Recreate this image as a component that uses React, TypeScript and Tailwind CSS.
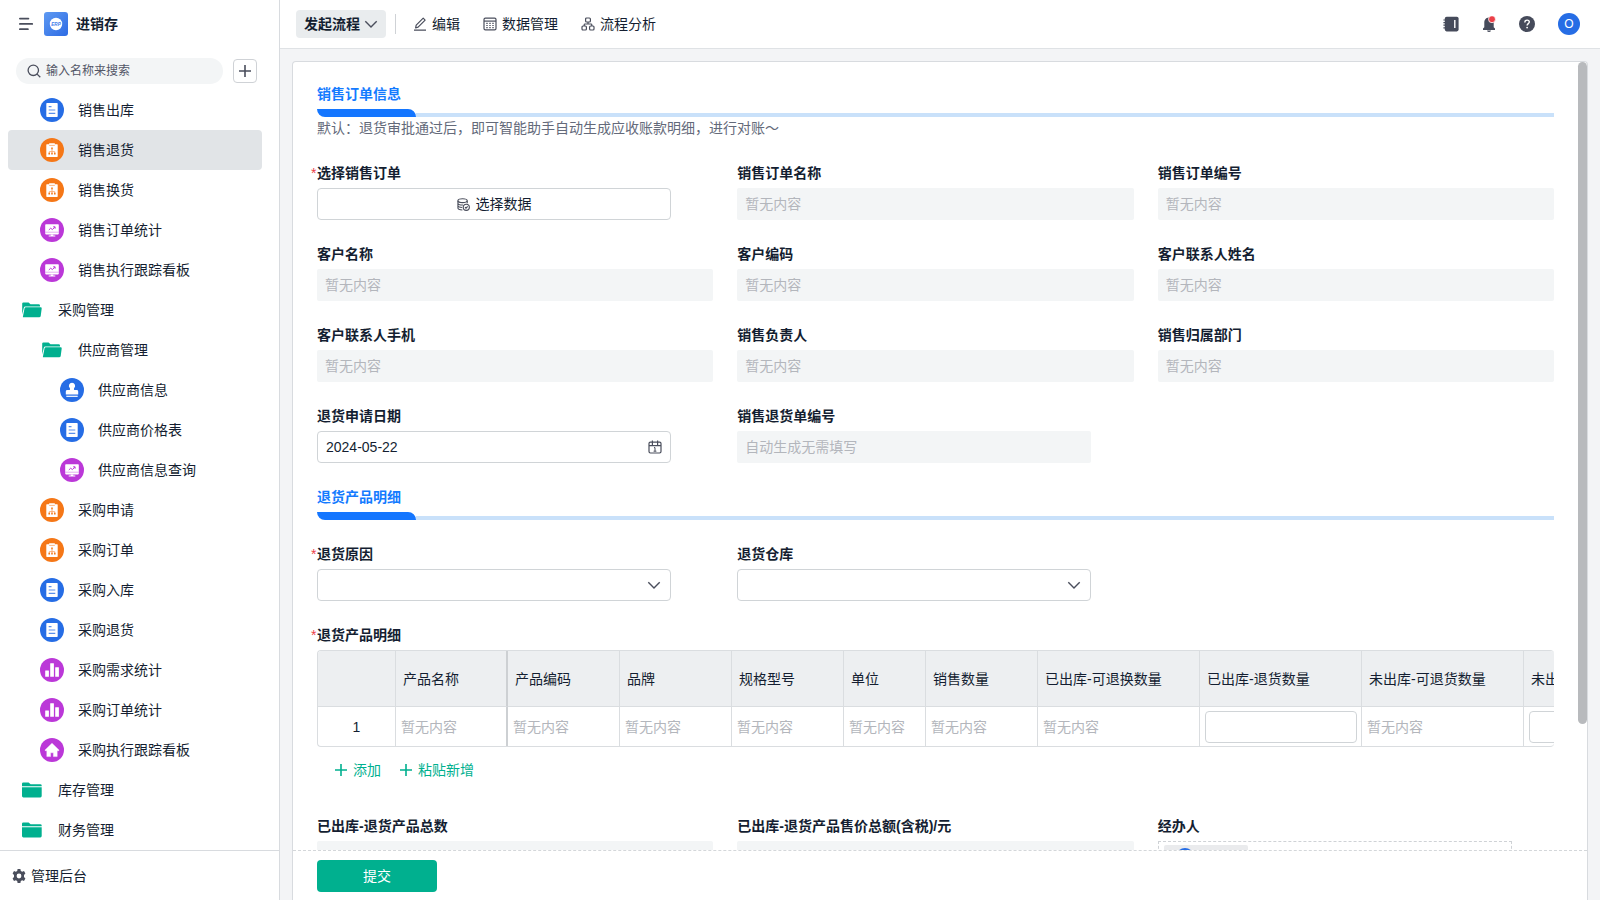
import { useState, type ReactNode } from "react";
import { clsx } from "clsx";

type IconName =
  | "folder"
  | "folderOpen"
  | "doc"
  | "flow"
  | "board"
  | "stamp"
  | "chart"
  | "home";

type NavItem = { label: string; icon: IconName; level: number };

const navItems: NavItem[] = [
  { label: "销售出库", icon: "doc", level: 1 },
  { label: "销售退货", icon: "flow", level: 1 },
  { label: "销售换货", icon: "flow", level: 1 },
  { label: "销售订单统计", icon: "board", level: 1 },
  { label: "销售执行跟踪看板", icon: "board", level: 1 },
  { label: "采购管理", icon: "folderOpen", level: 0 },
  { label: "供应商管理", icon: "folderOpen", level: 1 },
  { label: "供应商信息", icon: "stamp", level: 2 },
  { label: "供应商价格表", icon: "doc", level: 2 },
  { label: "供应商信息查询", icon: "board", level: 2 },
  { label: "采购申请", icon: "flow", level: 1 },
  { label: "采购订单", icon: "flow", level: 1 },
  { label: "采购入库", icon: "doc", level: 1 },
  { label: "采购退货", icon: "doc", level: 1 },
  { label: "采购需求统计", icon: "chart", level: 1 },
  { label: "采购订单统计", icon: "chart", level: 1 },
  { label: "采购执行跟踪看板", icon: "home", level: 1 },
  { label: "库存管理", icon: "folder", level: 0 },
  { label: "财务管理", icon: "folder", level: 0 },
];

const indent = ["pl-3", "pl-8", "pl-[52px]"];

const columns = [
  { title: "产品名称", width: "w-[112px]" },
  { title: "产品编码", width: "w-[112px]" },
  { title: "品牌", width: "w-[112px]" },
  { title: "规格型号", width: "w-[112px]" },
  { title: "单位", width: "w-[82px]" },
  { title: "销售数量", width: "w-[112px]" },
  { title: "已出库-可退换数量", width: "w-[162px]" },
  { title: "已出库-退货数量", width: "w-[162px]", editable: true },
  { title: "未出库-可退货数量", width: "w-[162px]" },
  { title: "未出库-退货数量", width: "w-[162px]", editable: true },
];

function NavIcon({ name }: { name: IconName }) {
  const svg = (children: ReactNode) => (
    <svg className="h-6 w-6 shrink-0" viewBox="0 0 24 24" aria-hidden="true">
      {children}
    </svg>
  );
  switch (name) {
    case "folder":
      return svg(
        <>
          <path d="M2 8.2V5.8Q2 4.5 3.3 4.5H8.6L10.6 6.2H20.2Q21.7 6.2 21.7 7.6V8.2Z" fill="#00b08f" />
          <path d="M2 9.2H21.7V18Q21.7 19.4 20.3 19.4H3.4Q2 19.4 2 18Z" fill="#00b08f" />
        </>,
      );
    case "folderOpen":
      return svg(
        <>
          <path d="M2.2 16.5V5.6Q2.2 4.5 3.4 4.5H8.6L10.5 6.2H18.6Q20 6.2 20 7.6V8.5H5.4Q4.1 8.5 3.8 9.7Z" fill="#00b08f" />
          <path d="M6 9.3H20.6Q21.9 9.3 21.7 10.6L20.7 17.9Q20.5 19.3 19.1 19.3H3.2Q2.8 19.3 2.9 18.8L4.5 10.4Q4.7 9.3 6 9.3Z" fill="#00b08f" />
        </>,
      );
    case "doc":
      return svg(
        <>
          <circle cx="12" cy="12" r="12" fill="#266de5" />
          <rect x="6.3" y="5" width="11.4" height="14" rx="0.8" fill="#fff" />
          <path d="M8.7 8.7H11.5M8.7 12H15.3M8.7 15.3H15.3" stroke="#5a90ec" strokeWidth="1.2" />
        </>,
      );
    case "flow":
      return svg(
        <>
          <circle cx="12" cy="12" r="12" fill="#f57717" />
          <path d="M6.9 6.2H9.2V5.3H14.8V6.2H17.1Q17.7 6.2 17.7 6.8V18.2Q17.7 18.9 17.1 18.9H6.9Q6.3 18.9 6.3 18.2V6.8Q6.3 6.2 6.9 6.2Z" fill="#fff" />
          <path d="M9.2 7.4H14.8" stroke="#f9a263" strokeWidth="0.8" />
          <path d="M12 11V15M9.3 15V13.6H14.7V15" fill="none" stroke="#f9a263" strokeWidth="0.8" />
          <path d="M11.2 9.6H12.8V11.2H11.2ZM8.4 14.8H10V16.4H8.4ZM11.2 14.8H12.8V16.4H11.2ZM14 14.8H15.6V16.4H14Z" fill="#f57717" />
        </>,
      );
    case "board":
      return svg(
        <>
          <circle cx="12" cy="12" r="12" fill="#bb38d8" />
          <rect x="5.2" y="6.2" width="13.6" height="10.2" rx="0.8" fill="#fff" />
          <path d="M5.2 14.2H18.8" stroke="#d68ae8" strokeWidth="0.7" />
          <path d="M10.7 16.4H13.3V17.4H15.3V18.5H8.7V17.4H10.7Z" fill="#fff" />
          <path d="M8.8 12L10.7 10.2L12.4 11.6L14.8 9.1M13.2 8.8H15.1V10.7" fill="none" stroke="#bb38d8" strokeWidth="1" />
        </>,
      );
    case "stamp":
      return svg(
        <>
          <circle cx="12" cy="12" r="12" fill="#266de5" />
          <path d="M12 4.8A3.1 3.1 0 0 1 14.1 10.2C13.7 11.2 14 12 14.8 12H16.6Q18.2 12 18.2 13.4V16.4H5.8V13.4Q5.8 12 7.4 12H9.2C10 12 10.3 11.2 9.9 10.2A3.1 3.1 0 0 1 12 4.8Z" fill="#fff" />
          <path d="M6.3 18.3H17.7" stroke="#fff" strokeWidth="1.2" />
        </>,
      );
    case "chart":
      return svg(
        <>
          <circle cx="12" cy="12" r="12" fill="#bb38d8" />
          <rect x="5.2" y="12.4" width="3.7" height="6.4" rx="0.4" fill="#fff" />
          <rect x="10.2" y="5.2" width="3.7" height="13.6" rx="0.4" fill="#fff" />
          <rect x="15.2" y="9.2" width="3.7" height="9.6" rx="0.4" fill="#fff" />
        </>,
      );
    case "home":
      return svg(
        <>
          <circle cx="12" cy="12" r="12" fill="#bb38d8" />
          <path d="M12 5.2L19 12.1Q19.2 12.7 18.5 12.7H17.2V18.6H13.4V14.8H10.6V18.6H6.8V12.7H5.5Q4.8 12.7 5 12.1Z" fill="#fff" stroke="#fff" strokeWidth="0.4" strokeLinejoin="round" />
        </>,
      );
  }
}

function PlusIcon({ className }: { className?: string }) {
  return (
    <svg className={className} viewBox="0 0 14 14" fill="none" stroke="currentColor" strokeWidth="1.6" aria-hidden="true">
      <path d="M7 1V13M1 7H13" />
    </svg>
  );
}

function ChevronIcon({ className }: { className?: string }) {
  return (
    <svg className={className} viewBox="0 0 14 14" fill="none" stroke="currentColor" strokeWidth="1.4" aria-hidden="true">
      <path d="M1.3 4.2L7 9.9L12.7 4.2" />
    </svg>
  );
}

function Sidebar() {
  const [active, setActive] = useState("销售退货");
  return (
    <aside className="flex w-[280px] shrink-0 flex-col border-r border-[#d8dbdf] bg-white">
      <div className="flex h-12 shrink-0 items-center pl-[18px]">
        <button type="button" aria-label="收起菜单" className="text-[#4a4e5c]">
          <svg className="h-4 w-4" viewBox="0 0 16 16" stroke="currentColor" strokeWidth="1.8" strokeLinecap="round" aria-hidden="true">
            <path d="M1.9 2.6H10.4M1.9 7.9H14.2M1.9 13.2H9.9" />
          </svg>
        </button>
        <svg className="ml-2.5 h-6 w-6" viewBox="0 0 24 24" aria-hidden="true">
          <defs>
            <linearGradient id="logo" x1="0" y1="0" x2="1" y2="1">
              <stop offset="0" stopColor="#5f9af2" />
              <stop offset="1" stopColor="#2d6be4" />
            </linearGradient>
          </defs>
          <rect width="24" height="24" rx="3" fill="url(#logo)" />
          <circle cx="12" cy="12" r="6.2" fill="#fff" />
          <text x="12" y="13.7" textAnchor="middle" fontSize="4.6" fontWeight="700" fontStyle="italic" fill="#3f7cea">
            ERP
          </text>
        </svg>
        <h1 className="ml-2 text-sm font-bold">进销存</h1>
      </div>
      <div className="flex items-center px-4 pt-2.5 pb-1.5">
        <label className="flex h-[26px] w-[207px] items-center gap-[5px] rounded-full bg-[#f3f5f6] pl-[11px]">
          <svg className="h-3.5 w-3.5 shrink-0 text-[#4a4e5c]" viewBox="0 0 14 14" fill="none" stroke="currentColor" strokeWidth="1.3" aria-hidden="true">
            <circle cx="6.3" cy="6.3" r="5.2" />
            <path d="M10.1 10.1L13.3 13.3" />
          </svg>
          <input
            type="text"
            aria-label="输入名称来搜索"
            placeholder="输入名称来搜索"
            className="w-full bg-transparent text-xs outline-none placeholder:text-[#525666]"
          />
        </label>
        <button
          type="button"
          aria-label="新建"
          className="ml-2.5 grid h-6 w-6 place-items-center rounded border border-[#cfd2d6] text-[#4a4e5c]"
        >
          <PlusIcon className="h-3.5 w-3.5" />
        </button>
      </div>
      <nav className="min-h-0 flex-1 overflow-hidden px-2">
        {navItems.map((item) => (
          <button
            key={item.label}
            type="button"
            onClick={() => setActive(item.label)}
            className={clsx(
              "flex h-10 w-[254px] items-center gap-3.5 rounded text-left text-sm",
              indent[item.level],
              item.label === active && "bg-[#e1e4e7]",
            )}
          >
            <NavIcon name={item.icon} />
            {item.label}
          </button>
        ))}
      </nav>
      <button
        type="button"
        className="flex h-[50px] shrink-0 items-center gap-[5px] border-t border-[#d8dbdf] pl-3 text-sm"
      >
        <svg className="h-3.5 w-3.5 text-[#4a4e5c]" viewBox="0 0 14 14" aria-hidden="true">
          <path
            fill="currentColor"
            fillRule="evenodd"
            d="M5.6 0H8.4L8.8 1.9L10.2 2.7L12 2.1L13.4 4.5L12 5.9V8.1L13.4 9.5L12 11.9L10.2 11.3L8.8 12.1L8.4 14H5.6L5.2 12.1L3.8 11.3L2 11.9L0.6 9.5L2 8.1V5.9L0.6 4.5L2 2.1L3.8 2.7L5.2 1.9ZM7 4.6A2.4 2.4 0 1 0 7 9.4A2.4 2.4 0 1 0 7 4.6Z"
          />
        </svg>
        管理后台
      </button>
    </aside>
  );
}

function Header() {
  return (
    <header className="flex h-[49px] shrink-0 items-center justify-between border-b border-[#dfe2e5] bg-white pr-5 pl-4">
      <div className="flex items-center text-sm">
        <button type="button" className="flex h-7 items-center gap-1 rounded bg-[#e9ecee] px-2 font-bold">
          发起流程
          <ChevronIcon className="h-3.5 w-3.5 text-[#4a4e5c]" />
        </button>
        <div className="ml-[9px] h-5 w-px bg-[#cfd2d6]" />
        <div className="ml-[17px] flex items-center gap-[23px]">
          <button type="button" className="flex items-center gap-[5px]">
            <svg className="h-3.5 w-3.5 text-[#4a4e5c]" viewBox="0 0 14 14" fill="none" stroke="currentColor" strokeWidth="1.2" aria-hidden="true">
              <path d="M2.6 10.8L3.2 8.2L10.2 1.2L12.1 3.1L5.1 10.2ZM1 13.2H13" strokeLinejoin="round" />
            </svg>
            编辑
          </button>
          <button type="button" className="flex items-center gap-[5px]">
            <svg className="h-3.5 w-3.5 text-[#4a4e5c]" viewBox="0 0 14 14" fill="none" stroke="currentColor" strokeWidth="1.2" aria-hidden="true">
              <rect x="1" y="1.2" width="12" height="11.6" rx="1.4" />
              <path d="M1 4.1H13" />
              <path d="M3.3 6.4H4.7M6.3 6.4H7.7M9.3 6.4H10.7M3.3 8.5H4.7M6.3 8.5H7.7M9.3 8.5H10.7M3.3 10.6H4.7M6.3 10.6H7.7M9.3 10.6H10.7" strokeWidth="1.1" />
            </svg>
            数据管理
          </button>
          <button type="button" className="flex items-center gap-[5px]">
            <svg className="h-3.5 w-3.5 text-[#4a4e5c]" viewBox="0 0 14 14" fill="none" stroke="currentColor" strokeWidth="1.2" aria-hidden="true">
              <rect x="4.6" y="1" width="4.8" height="4" rx="1" />
              <rect x="1" y="9" width="4.4" height="4" rx="1" />
              <rect x="8.6" y="9" width="4.4" height="4" rx="1" />
              <path d="M7 5V7M3.2 9V7.8Q3.2 7 4 7H10Q10.8 7 10.8 7.8V9" />
            </svg>
            流程分析
          </button>
        </div>
      </div>
      <div className="flex items-center text-[#464b5b]">
        <div className="mr-[23px] flex items-center gap-[22px]">
          <button type="button" aria-label="通讯录">
            <svg className="h-4 w-4" viewBox="0 0 16 16" aria-hidden="true">
              <rect x="1.8" y="0.8" width="13.8" height="14.6" rx="1.8" fill="currentColor" />
              <path d="M0.4 4H3M0.4 6.6H3M0.4 9.2H3M0.4 11.8H3" stroke="currentColor" strokeWidth="1.2" />
              <path d="M11.8 4V12" stroke="#fff" strokeWidth="1.4" />
            </svg>
          </button>
          <button type="button" aria-label="消息">
            <svg className="h-4 w-4" viewBox="0 0 16 16" aria-hidden="true">
              <path d="M7.9 1.4C4.6 1.6 3.3 4 3.3 6.6V11.2L2 12.6V14H14V12.6L12.7 11.2V6.6C12.7 4 11 1.6 7.9 1.4Z" fill="currentColor" />
              <path d="M6 14.4H10Q9.6 16 8 16T6 14.4Z" fill="currentColor" />
              <circle cx="11" cy="3.2" r="3.5" fill="#eb4048" stroke="#fff" strokeWidth="0.8" />
            </svg>
          </button>
          <button type="button" aria-label="帮助">
            <svg className="h-4 w-4" viewBox="0 0 16 16" aria-hidden="true">
              <circle cx="8" cy="8" r="8" fill="currentColor" />
              <path d="M5.8 6.4C5.8 4.9 6.8 4.1 8.1 4.1S10.3 4.9 10.3 6.1C10.3 7.6 8.1 7.7 8.1 9.5" fill="none" stroke="#fff" strokeWidth="1.4" />
              <circle cx="8.1" cy="11.6" r="0.9" fill="#fff" />
            </svg>
          </button>
        </div>
        <button type="button" className="grid h-[22px] w-[22px] place-items-center rounded-full bg-[#266de5] text-xs text-white">
          O
        </button>
      </div>
    </header>
  );
}

function SectionTitle({ children }: { children: ReactNode }) {
  return (
    <div>
      <h2 className="mb-1 text-sm leading-[21px] font-semibold text-[#147bff]">{children}</h2>
      <div className="flex h-2 items-end">
        <div className="h-2 w-[8%] rounded-tr-lg rounded-bl-lg bg-[#1476ff]" />
        <div className="h-1 flex-1 bg-[#c9e1fa]" />
      </div>
    </div>
  );
}

function Field({
  id,
  label,
  required,
  children,
}: {
  id: string;
  label: string;
  required?: boolean;
  children: ReactNode;
}) {
  return (
    <div className="min-w-0">
      <label htmlFor={id} className="relative mb-1 block text-sm leading-[21px] font-bold">
        {required && <span className="absolute -left-1.5 font-normal text-[#eb4048]">*</span>}
        {label}
      </label>
      {children}
    </div>
  );
}

function ReadonlyField({ id, label }: { id: string; label: string }) {
  return (
    <Field id={id} label={label}>
      <input
        id={id}
        disabled
        placeholder="暂无内容"
        className="h-8 w-full rounded-xs bg-[#f3f5f6] px-2 text-sm placeholder:text-[#b3b6bc]"
      />
    </Field>
  );
}

function SelectField({ id, label, required }: { id: string; label: string; required?: boolean }) {
  return (
    <Field id={id} label={label} required={required}>
      <div className="relative w-full max-w-[354px]">
        <select
          id={id}
          defaultValue=""
          className="h-8 w-full appearance-none rounded border border-[#d0d4d7] bg-white px-2 text-sm outline-none"
        >
          <option value="" />
        </select>
        <ChevronIcon className="pointer-events-none absolute top-[9px] right-2.5 h-3.5 w-3.5 text-[#4a4e5c]" />
      </div>
    </Field>
  );
}

function ProductTable() {
  return (
    <div className="overflow-hidden rounded border border-r-0 border-[#dadde0]">
      <table className="w-[1530px] table-fixed border-separate border-spacing-0 text-sm">
        <thead>
          <tr className="h-14 bg-[#edeff1]">
            <th className="w-[78px] border-r border-b border-[#dadde0]" aria-label="序号" />
            {columns.map((column, index) => (
              <th
                key={column.title}
                className={clsx(
                  "border-b border-[#dadde0] px-[7px] text-left font-normal",
                  index === 0 ? "border-r-2 border-r-[#cdd0d3]" : "border-r",
                  column.width,
                )}
              >
                {column.title}
              </th>
            ))}
            <th aria-hidden="true" />
          </tr>
        </thead>
        <tbody>
          <tr className="h-[39px]">
            <td className="border-r border-[#dadde0] text-center">1</td>
            {columns.map((column, index) => (
              <td
                key={column.title}
                className={clsx(
                  "border-[#dadde0] py-0 text-[#b3b6bc]",
                  index === 0 ? "border-r-2 border-r-[#cdd0d3]" : "border-r",
                  column.editable ? "pr-1 pl-[5px]" : "px-[5px]",
                )}
              >
                {column.editable ? (
                  <input
                    aria-label={column.title}
                    className="block h-8 w-full rounded border border-[#d0d4d7] px-2 text-[#141e31] outline-none"
                  />
                ) : (
                  "暂无内容"
                )}
              </td>
            ))}
            <td aria-hidden="true" />
          </tr>
        </tbody>
      </table>
    </div>
  );
}

function OrderForm() {
  return (
    <form className="grid grid-cols-3 gap-6 pt-[22px] pr-[33px] pb-6 pl-6">
      <div className="col-span-3">
        <SectionTitle>销售订单信息</SectionTitle>
        <p className="mt-px text-sm leading-[21px] text-[#646a7a]">
          默认：退货审批通过后，即可智能助手自动生成应收账款明细，进行对账～
        </p>
      </div>

      <Field id="order" label="选择销售订单" required>
        <button
          id="order"
          type="button"
          className="flex h-8 w-full max-w-[354px] items-center justify-center gap-1.5 rounded border border-[#d0d4d7] text-sm"
        >
          <svg className="h-[13px] w-[13px] text-[#4a4e5c]" viewBox="0 0 14 14" fill="none" stroke="currentColor" strokeWidth="1.2" aria-hidden="true">
            <ellipse cx="6" cy="2.9" rx="5" ry="2.1" />
            <path d="M1 2.9V10.8C1 12 3.2 12.8 5.8 12.9M11 2.9V5.6M1 5.6C1 6.8 3.4 7.6 6.4 7.6M1 8.2C1 9.4 3.4 10.2 5.6 10.2" />
            <circle cx="10" cy="10" r="3.3" />
            <path d="M8.6 10L9.7 11L11.5 9.1" />
          </svg>
          选择数据
        </button>
      </Field>
      <ReadonlyField id="order-name" label="销售订单名称" />
      <ReadonlyField id="order-no" label="销售订单编号" />
      <ReadonlyField id="customer" label="客户名称" />
      <ReadonlyField id="customer-code" label="客户编码" />
      <ReadonlyField id="contact" label="客户联系人姓名" />
      <ReadonlyField id="contact-phone" label="客户联系人手机" />
      <ReadonlyField id="sales-owner" label="销售负责人" />
      <ReadonlyField id="sales-dept" label="销售归属部门" />

      <Field id="apply-date" label="退货申请日期">
        <div className="relative w-full max-w-[354px]">
          <input
            id="apply-date"
            type="text"
            defaultValue="2024-05-22"
            className="h-8 w-full rounded border border-[#d0d4d7] px-2 text-sm outline-none"
          />
          <svg className="pointer-events-none absolute top-[9px] right-[9px] h-3.5 w-3.5 text-[#4a4e5c]" viewBox="0 0 14 14" fill="none" stroke="currentColor" strokeWidth="1.2" aria-hidden="true">
            <rect x="1" y="2.2" width="12" height="10.8" rx="1.4" />
            <path d="M1 5.6H13M4.4 0.6V5.6M9.6 0.6V5.6" />
            <path d="M6 7.6H7V11.2M5.6 11.2H8.4" strokeWidth="1" />
          </svg>
        </div>
      </Field>
      <Field id="return-no" label="销售退货单编号">
        <input
          id="return-no"
          disabled
          placeholder="自动生成无需填写"
          className="h-8 w-full max-w-[354px] rounded-xs bg-[#f3f5f6] px-2 text-sm placeholder:text-[#b3b6bc]"
        />
      </Field>

      <div className="col-span-3">
        <SectionTitle>退货产品明细</SectionTitle>
      </div>

      <SelectField id="reason" label="退货原因" required />
      <SelectField id="warehouse" label="退货仓库" />

      <div className="col-span-3">
        <Field id="add-product" label="退货产品明细" required>
          <ProductTable />
          <div className="flex h-[45px] items-center gap-[18px] pl-[17px] text-sm text-[#00b08f]">
            <button id="add-product" type="button" className="flex items-center gap-[5px]">
              <PlusIcon className="h-3.5 w-3.5" />
              添加
            </button>
            <button type="button" className="flex items-center gap-[5px]">
              <PlusIcon className="h-3.5 w-3.5" />
              粘贴新增
            </button>
          </div>
        </Field>
      </div>

      <ReadonlyField id="total-count" label="已出库-退货产品总数" />
      <ReadonlyField id="total-amount" label="已出库-退货产品售价总额(含税)/元" />
      <Field id="operator" label="经办人">
        <button
          id="operator"
          type="button"
          className="flex h-8 w-full max-w-[354px] items-center border border-dashed border-[#cfd2d6] px-[5px]"
        >
          <span className="flex h-6 w-[84px] items-center rounded-xs bg-[#eaebed] pl-3">
            <span className="h-[18px] w-[18px] rounded-full bg-[#266de5]" />
          </span>
        </button>
      </Field>
    </form>
  );
}

export default function App() {
  return (
    <div className="flex h-screen overflow-hidden bg-[#f3f4f6] font-['Liberation_Sans','Noto_Sans_CJK_SC',sans-serif] text-[#141e31]">
      <Sidebar />
      <div className="flex min-w-0 flex-1 flex-col">
        <Header />
        <main className="min-h-0 flex-1 px-3 pt-3">
          <div className="flex h-full flex-col rounded-t border border-b-0 border-[#d8dbdf] bg-white">
            <div className="relative min-h-0 flex-1">
              <div className="h-full overflow-y-auto [scrollbar-width:none]">
                <OrderForm />
              </div>
              <div className="absolute top-0 right-0 h-[84%] w-[9px] rounded-full bg-[#b8babd]" />
            </div>
            <footer className="flex h-[50px] shrink-0 items-center border-t border-dashed border-[#d4d7da] px-6">
              <button type="button" className="h-8 w-[120px] rounded bg-[#00b08f] text-sm text-white">
                提交
              </button>
            </footer>
          </div>
        </main>
      </div>
    </div>
  );
}
